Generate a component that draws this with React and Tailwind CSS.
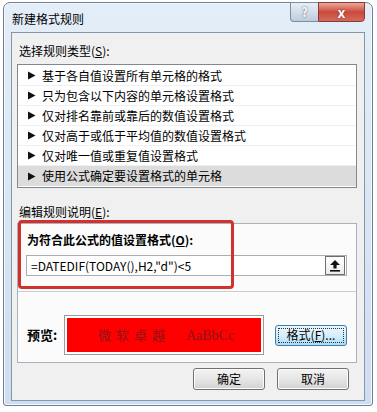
import React from "react";

const rules = [
  "基于各自值设置所有单元格的格式",
  "只为包含以下内容的单元格设置格式",
  "仅对排名靠前或靠后的数值设置格式",
  "仅对高于或低于平均值的数值设置格式",
  "仅对唯一值或重复值设置格式",
  "使用公式确定要设置格式的单元格",
];

const font = { fontFamily: '"Noto Sans CJK SC", "Noto Sans", sans-serif' };

const Arrow = () => (
  <svg width="9" height="9" viewBox="0 0 9 9" className="shrink-0">
    <path d="M1 0.5 L8.5 4.5 L1 8.5 Z" fill="#111" />
  </svg>
);

const UpIcon = () => (
  <svg width="12" height="13" viewBox="0 0 12 13">
    <path d="M6 1 L11 6 L7.6 6 L7.6 9.5 L4.4 9.5 L4.4 6 L1 6 Z" fill="#111" />
    <rect x="1" y="11" width="10" height="1.6" fill="#111" />
  </svg>
);

const WinButton = ({ children }) => (
  <button className="w-[72px] h-[22px] rounded-[3px] border border-[#707070] bg-gradient-to-b from-[#f3f3f3] via-[#e6e6e6] to-[#d2d2d2] text-[12px] text-black shadow-[inset_0_0_0_1px_#fcfcfc] flex items-center justify-center">
    {children}
  </button>
);

export default function App() {
  return (
    <div className="w-[377px] h-[412px] bg-white pt-[2px] pl-[3px]" style={font}>
      <div className="w-[370px] h-[404px] rounded-t-[7px] rounded-b-[3px] border border-[#6c7f96] bg-gradient-to-b from-[#e4eef8] to-[#cddef0] shadow-[inset_0_0_0_1px_#f4f8fc] flex flex-col px-[7px] pb-[4px]">
        {/* title bar */}
        <div className="h-[29px] flex items-start">
          <div className="pt-[8px] pl-[1px] text-[12px] leading-[16px] text-black">新建格式规则</div>
          <div className="ml-auto flex -mt-px">
            <div className="w-[28px] h-[20px] rounded-bl-[4px] border border-[#7b8da2] border-r-0 bg-gradient-to-b from-[#e6edf5] via-[#d4dfeb] to-[#bccbdc] flex items-center justify-center text-[13px] font-bold text-[#f6f8fa] [text-shadow:0_0_2px_#4a5a6e]">
              ?
            </div>
            <div className="w-[47px] h-[20px] rounded-br-[4px] border border-[#8a3a34] bg-gradient-to-b from-[#e9a99c] via-[#c9493c] to-[#d26b5c] flex items-center justify-center text-[14px] font-bold text-white [text-shadow:0_0_2px_#6b1f18]">
              x
            </div>
          </div>
        </div>

        {/* client */}
        <div className="flex-1 border border-[#8797ab] bg-[#f0f0f0] flex flex-col pl-[5px] pr-[7px]">
          <div className="mt-[10px] pl-[2px] text-[12px] leading-[16px] text-black">
            选择规则类型(<span className="underline">S</span>):
          </div>

          <div className="mt-[5px] h-[124px] border border-[#828790] bg-white pt-px">
            {rules.map((r, i) => (
              <div
                key={r}
                className={
                  "h-[20px] flex items-center gap-[6px] pl-[9px] text-[12px] text-black " +
                  (i === 5 ? "bg-[#dcdcdc]" : "border-b border-[#f0f0f0]")
                }
              >
                <Arrow />
                <span>{r}</span>
              </div>
            ))}
          </div>

          <div className="mt-[16px] pl-[2px] text-[12px] leading-[16px] text-black">
            编辑规则说明(<span className="underline">E</span>):
          </div>

          <div className="relative mt-[3px] h-[140px] border border-[#a9b2bc] bg-[#fbfbfb] flex flex-col">
            <div className="mt-[8px] pl-[9px] text-[12px] leading-[16px] font-bold text-black">
              为符合此公式的值设置格式(<span className="underline">O</span>):
            </div>
            <div className="mt-[7px] ml-[8px] mr-[9px] h-[21px] border border-[#abadb3] bg-white flex items-center">
              <span className="pl-[4px] text-[12px] text-black">
                =DATEDIF(TODAY(),H2,"d")&lt;5
              </span>
              <div className="ml-auto mr-px w-[20px] h-[19px] border border-[#6e6e6e] bg-gradient-to-b from-white to-[#ececec] flex items-center justify-center">
                <UpIcon />
              </div>
            </div>

            <div className="mt-[15px] h-px bg-[#c9ced4]" />

            <div className="mt-[23px] flex items-center">
              <div className="w-[46px] pl-[9px] text-[13px] font-bold text-black">预览:</div>
              <div className="w-[200px] h-[40px] border border-[#9a9a9a] bg-white p-[2px]">
                <div className="h-full bg-[#ff0000] flex items-center justify-center gap-[16px] pl-[4px] text-[13px] text-[#8e1414]">
                  <span className="tracking-[5px]">微软卓越</span>
                  <span style={{ fontFamily: '"Liberation Serif", serif' }} className="text-[14px]">AaBbCc</span>
                </div>
              </div>
              <button className="ml-[11px] w-[72px] h-[21px] rounded-[3px] border border-[#3c7fb1] bg-gradient-to-b from-[#eaf6fd] via-[#d6effc] to-[#a9dbf6] p-[2px] text-[12px] text-black">
                <div className="h-full border border-dotted border-[#333] flex items-center justify-center">
                  格式(<span className="underline">F</span>)...
                </div>
              </button>
            </div>

            {/* red highlight annotation */}
            <div className="absolute left-0 top-[-4px] w-[216px] h-[69px] rounded-[4px] border-[3px] border-[#d2322d]" />
          </div>

          <div className="mt-[5px] flex justify-end gap-[12px] pr-[8px]">
            <WinButton>确定</WinButton>
            <WinButton>取消</WinButton>
          </div>
        </div>
      </div>
    </div>
  );
}
